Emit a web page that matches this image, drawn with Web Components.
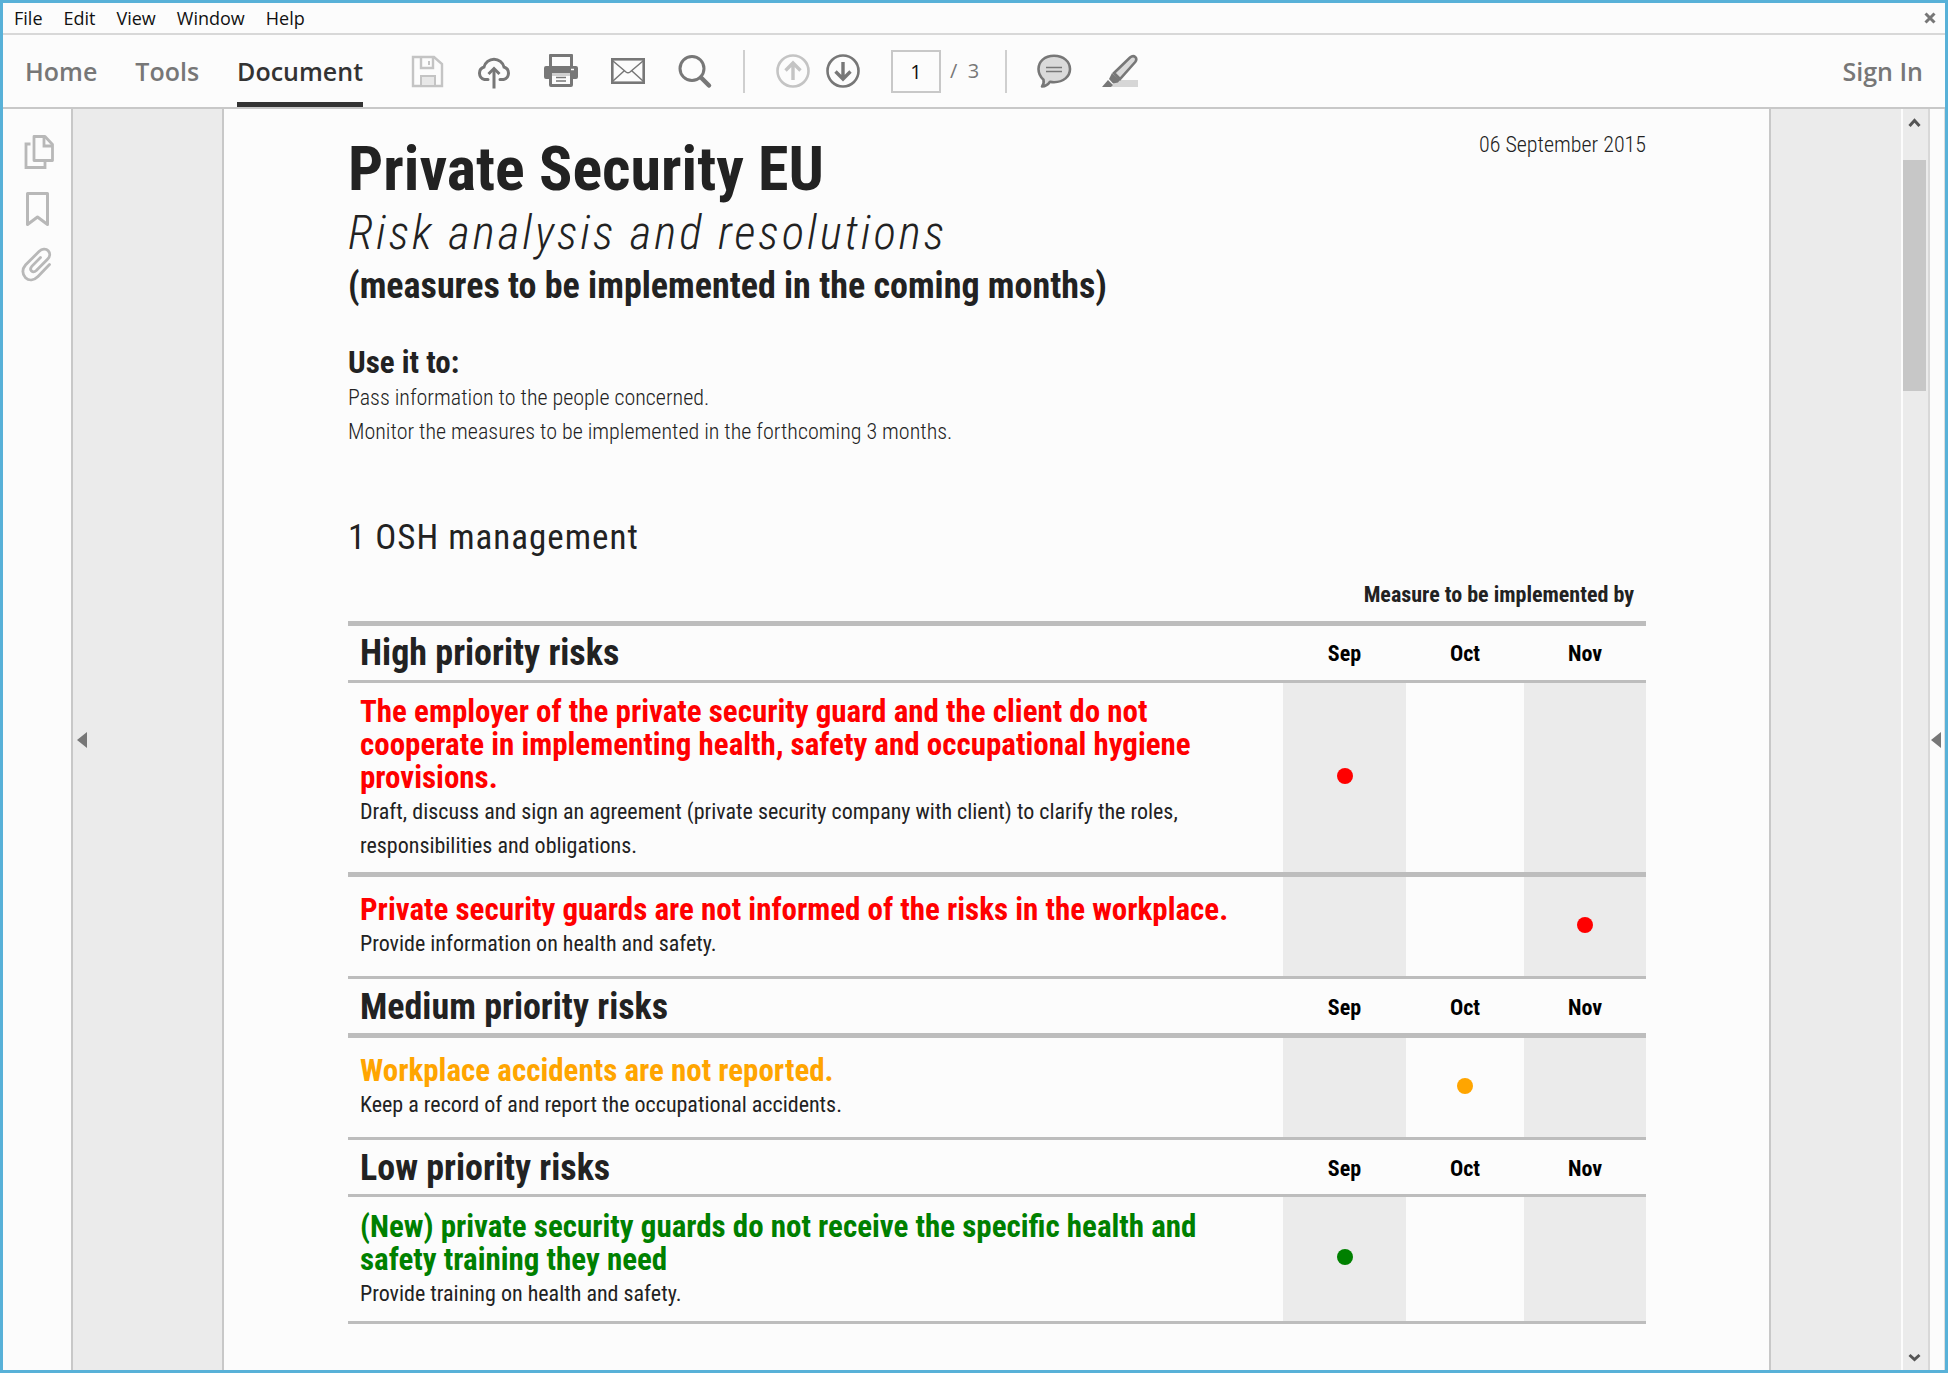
<!DOCTYPE html>
<html lang="en">
<head>
<meta charset="utf-8">
<title>Private Security EU</title>
<style>
  html, body { margin: 0; height: 100%; }
  body { font-family: "Open Sans", "Noto Sans", sans-serif; color: #222; overflow: hidden; }
</style>
</head>
<body>
<app-window>
  <menu-bar slot="menu"></menu-bar>
  <tool-bar slot="tools"></tool-bar>
  <side-rail slot="left"></side-rail>
  <doc-page>
    <risk-table></risk-table>
  </doc-page>
  <scroll-track slot="scroll"></scroll-track>
  <pane-toggle slot="right" label="Open tools pane"></pane-toggle>
</app-window>

<script>
const define = (name, html, setup) => {
  const template = document.createElement('template');
  template.innerHTML = html;
  customElements.define(name, class extends HTMLElement {
    constructor() {
      super();
      this.attachShadow({ mode: 'open' }).append(template.content.cloneNode(true));
    }
    connectedCallback() { if (setup) setup(this, this.shadowRoot); }
  });
};

const icons = {
  save: '<g fill="none" stroke="#c4c4c4" stroke-width="2.4"><path d="M4 4h21l8 7v22H4z"/><path d="M12 4v11h12V4" /><path d="M12 33v-10h14v10z" fill="#e8e8e8" stroke-width="2"/><path d="M20 8v4" stroke-width="2"/></g>',
  cloud: '<g fill="none" stroke="#777" stroke-width="3"><path d="M12 26.500H8.500A6.500 6.500 0 0 1 8 14a10.300 10.300 0 0 1 20 0a6.500 6.500 0 0 1-.5 12.500H24" stroke-linecap="round"/><path d="M18 35.500V17"/><path d="M12.500 21l5.500-5.500 5.500 5.500"/></g>',
  print: '<path fill="#777" d="M7 1h22a1 1 0 0 1 1 1v11h3a2 2 0 0 1 2 2v9a2 2 0 0 1-2 2h-3v6a2 2 0 0 1-2 2H8a2 2 0 0 1-2-2v-6H3a2 2 0 0 1-2-2v-9a2 2 0 0 1 2-2h3V2a1 1 0 0 1 1-1z"/><path fill="#fcfcfc" d="M9 4h18v9H9zM9 20h18v11H9z"/><path d="M9 20h18v3H9z" fill="#d0d0d0"/><path d="M13 24.500h10M13 28h10" stroke="#777" stroke-width="1.600"/><path d="M28 16.500h3" stroke="#fff" stroke-width="1.500"/>',
  mail: '<g fill="none" stroke="#777"><rect x="2.300" y="6.300" width="31.400" height="23.400" stroke-width="2.600"/><path d="M3 8l13 11q2 1.600 4 0L33 8M3 28l11-10M33 28L22 18" stroke-width="1.500"/></g>',
  search: '<g fill="none" stroke="#777"><circle cx="15" cy="15.500" r="12" stroke-width="3"/><path d="M24 24.500l8 8" stroke-width="4.500" stroke-linecap="round"/></g>',
  up: '<g fill="none" stroke="#c4c4c4"><circle cx="18" cy="18" r="15.500" stroke-width="2.600"/><path d="M18 27V11M10.500 17.500L18 10l7.500 7.500" stroke-width="3.400"/></g>',
  down: '<g fill="none" stroke="#777"><circle cx="18" cy="18" r="15.500" stroke-width="2.600"/><path d="M18 9v16M10.500 18.500L18 26l7.500-7.500" stroke-width="3.400"/></g>',
  comment: '<path d="M18 2.800c9.500 0 16 5.800 16 13.200s-6.500 13.200-16 13.200c-1.500 0-2.800-.2-4-.5-2 3-4.500 4.600-8 4.800 1.500-2 2-4.300 1.500-6.800C4.500 24 2.500 20.500 2.500 16 2.500 8.600 8.500 2.800 18 2.800z" fill="#dadada" stroke="#777" stroke-width="2.600" stroke-linejoin="round"/><path d="M10 14.500h16M10 18.500h16" stroke="#777" stroke-width="1.500"/>',
  pen: '<path d="M14 27h22v7H9z" fill="#d6d6d6"/><path d="M12 20L28 4.500q3-2.500 5.200-.5t0 5L18 26z" fill="#dadada" stroke="#777" stroke-width="2.600"/><path d="M10 20l8 7-2 2.500-5 1-4-4.500z" fill="#777"/><path d="M6 27l5 5-2 2H0z" fill="#777"/>',
  pages: '<g fill="none" stroke="#b8b8b8" stroke-width="2.800"><path d="M15 2.500h11l7.500 8v16H15z" stroke-linejoin="round"/><path d="M25 3v9h8"/><path d="M11.500 10H7v23.500h19V28"/></g>',
  bookmark: '<path d="M8.500 3.500h20v31L18.500 27l-10 7.500z" fill="none" stroke="#b8b8b8" stroke-width="3" stroke-linejoin="round"/>',
  clip: '<path d="M30.500 18.500L19 30.500c-4 4-9 4.500-12.500 1.200S3 23 6.500 19L20 5.500c3-3 7-3.200 9.200-.8s2 5.800-.7 8.600L17.300 24.500c-1.600 1.500-3.500 1.700-4.800.4s-1-3.200.5-4.800l8.500-8.600" fill="none" stroke="#b8b8b8" stroke-width="2.800" stroke-linecap="round"/>'
};

define('icon-button', `
<style>
  :host { display: block; flex: none; }
  button { display: block; border: 0; padding: 0; background: none; }
  svg { display: block; width: 36px; height: 36px; }
</style>
<button type="button"><svg viewBox="0 0 36 36" aria-hidden="true"></svg></button>`,
(host, root) => {
  root.querySelector('button').setAttribute('aria-label', host.getAttribute('label'));
  root.querySelector('svg').innerHTML = icons[host.getAttribute('icon')];
});

define('app-window', `
<style>
  :host { display: flex; flex-direction: column; box-sizing: border-box; height: 100vh;
          border: 3px solid #58b1d8; background: #fcfcfc; }
  .work { flex: 1; min-height: 0; display: flex; }
  .canvas { flex: 1; min-width: 0; display: flex; background: #ebebeb; overflow: hidden; }
</style>
<slot name="menu"></slot>
<slot name="tools"></slot>
<div class="work">
  <slot name="left"></slot>
  <div class="canvas">
    <pane-toggle wide label="Close navigation pane"></pane-toggle>
    <slot></slot>
  </div>
  <slot name="scroll"></slot>
  <slot name="right"></slot>
</div>`);

define('menu-bar', `
<style>
  :host { display: flex; align-items: center; height: 30px; padding: 0 8px 0 11px; border-bottom: 2px solid #d8d8d8; }
  nav { flex: 1; display: flex; gap: 21px; }
  button { border: 0; padding: 0; background: none; font: 18px/24px "Open Sans", "Noto Sans", sans-serif; color: #111; }
  svg { display: block; width: 14px; height: 14px; }
</style>
<nav aria-label="Menu">
  <button type="button">File</button><button type="button">Edit</button><button type="button">View</button>
  <button type="button">Window</button><button type="button">Help</button>
</nav>
<button type="button" aria-label="Close document"><svg viewBox="0 0 14 14"><path d="M2.500 2.500l9 9M11.500 2.500l-9 9" stroke="#777" stroke-width="3"/></svg></button>`);

define('tool-bar', `
<style>
  :host { display: flex; align-items: center; height: 72px; padding: 0 22px; border-bottom: 2px solid #c8c8c8; color: #777; }
  a { color: inherit; text-decoration: none; font: 600 25px/33px "Open Sans", "Noto Sans", sans-serif; }
  .tabs { display: flex; gap: 38px; align-self: stretch; }
  .tabs a { display: flex; align-items: center; box-sizing: border-box; border: solid transparent; border-width: 5px 0; }
  .tabs a[aria-current] { color: #333; border-bottom-color: #333; }
  .group { display: flex; align-items: center; }
  .files { gap: 31px; margin-left: 46px; }
  .paging { gap: 14px; margin: 0 26px 0 30px; }
  .notes { gap: 30px; margin-left: 29px; }
  .rule { width: 2px; height: 43px; background: #cfcfcf; }
  .rule.first { margin-left: 30px; }
  input { box-sizing: border-box; width: 50px; height: 43px; margin-left: 16px; border: 2px solid #c8c8c8; background: #fcfcfc;
          text-align: center; padding: 0; color: #111; }
  input, label { font: 20px/28px "Open Sans", "Noto Sans", sans-serif; }
  label { margin-left: -5px; white-space: pre; }
  .sign { margin-left: auto; }
</style>
<nav class="tabs"><a href="#home">Home</a><a href="#tools">Tools</a><a href="#document" aria-current="page">Document</a></nav>
<div class="group files">
  <icon-button icon="save" label="Save"></icon-button>
  <icon-button icon="cloud" label="Upload"></icon-button>
  <icon-button icon="print" label="Print"></icon-button>
  <icon-button icon="mail" label="Send by email"></icon-button>
  <icon-button icon="search" label="Find"></icon-button>
</div>
<div class="rule first"></div>
<div class="group paging">
  <icon-button icon="up" label="Previous page"></icon-button>
  <icon-button icon="down" label="Next page"></icon-button>
  <input id="page" value="1">
  <label for="page">/  3</label>
</div>
<div class="rule"></div>
<div class="group notes">
  <icon-button icon="comment" label="Comment"></icon-button>
  <icon-button icon="pen" label="Highlight"></icon-button>
</div>
<a class="sign" href="#sign-in">Sign In</a>`);

define('side-rail', `
<style>
  :host { display: flex; flex-direction: column; align-items: center; gap: 20px; width: 70px; flex: none;
          padding-top: 25px; box-sizing: border-box; border-right: 2px solid #c8c8c8; }
</style>
<icon-button icon="pages" label="Page thumbnails"></icon-button>
<icon-button icon="bookmark" label="Bookmarks"></icon-button>
<icon-button icon="clip" label="Attachments"></icon-button>`);

define('pane-toggle', `
<style>
  :host { display: flex; align-items: center; flex: none; width: 15px; padding-left: 1px; box-sizing: border-box; border-right: 1px solid #ddd; }
  :host([wide]) { width: 151px; padding-left: 4px; border-right: 2px solid #c8c8c8; }
  button { border: 0; padding: 0; background: none; }
  svg { display: block; width: 10px; height: 16px; }
</style>
<button type="button"><svg viewBox="0 0 10 16"><path d="M10 0v16L0 8z" fill="#777"/></svg></button>`,
(host, root) => root.querySelector('button').setAttribute('aria-label', host.getAttribute('label')));

define('scroll-track', `
<style>
  :host { display: flex; flex-direction: column; align-items: flex-start; flex: none; width: 29px; box-sizing: border-box;
          border-left: 2px solid #fcfcfc; border-right: 2px solid #d8d8d8; background: #ebebeb; }
  button { border: 0; padding: 8px 5px; background: none; }
  button:last-of-type { padding-bottom: 6px; }
  svg { display: block; width: 13px; height: 12px; }
  .track { flex: 1; align-self: stretch; padding: 23px 2px 0 0; }
  .thumb { height: 19.500%; background: #c7c7c7; }
</style>
<button type="button" aria-label="Scroll up"><svg viewBox="0 0 13 12"><path d="M1.500 9l5-5.500 5 5.500" fill="none" stroke="#555" stroke-width="3"/></svg></button>
<div class="track"><div class="thumb"></div></div>
<button type="button" aria-label="Scroll down"><svg viewBox="0 0 13 12"><path d="M1.500 3l5 4.500 5-4.500" fill="none" stroke="#555" stroke-width="3"/></svg></button>`);

define('doc-page', `
<style>
  :host { display: block; flex: 1; min-width: 0; box-sizing: border-box; margin-right: 130px; padding: 19px 123px 0 124px;
          background: #fcfcfc; border-right: 2px solid #c8c8c8;
          font-family: "Roboto Condensed", "Liberation Sans Narrow", "Roboto", sans-serif; }
  header { display: flex; justify-content: space-between; align-items: flex-start; }
  h1, h2, h3, p { margin: 0; }
  h1 { font-size: 62px; line-height: 82px; font-weight: 700; }
  .sub { font-size: 47px; line-height: 46px; font-weight: 300; font-style: italic; letter-spacing: 3px; }
  .scope { font-size: 36px; line-height: 60px; font-weight: 700; }
  h3 { margin-top: 29px; font-size: 31px; line-height: 36px; font-weight: 700; }
  p { font-size: 22px; line-height: 34px; font-weight: 300; }
  .topic { margin-top: 64px; font-size: 35px; line-height: 50px; font-weight: 400; letter-spacing: 1px; }
</style>
<header><h1>Private Security EU</h1><p><time datetime="2015-09-06">06 September 2015</time></p></header>
<h2 class="sub">Risk analysis and resolutions</h2>
<h2 class="scope">(measures to be implemented in the coming months)</h2>
<h3>Use it to:</h3>
<p>Pass information to the people concerned.</p>
<p>Monitor the measures to be implemented in the forthcoming 3 months.</p>
<h2 class="topic">1 OSH management</h2>
<slot></slot>`);

define('risk-table', `
<style>
  :host { display: block; margin-top: 15px; }
  table { width: 100%; table-layout: fixed; border-spacing: 0; color: #222; }
  .m1 { width: 123px; } .m2 { width: 118px; } .m3 { width: 122px; }
  caption { text-align: right; padding: 0 12px 9px 0; font-size: 22px; line-height: 34px; font-weight: 700; }
  th, td { padding: 0; border-bottom: 3px solid #bdbdbd; }
  tbody:first-of-type tr:first-child > * { border-top: 5px solid #bdbdbd; }
  tr.thick > * { border-bottom-width: 5px; }
  th { height: 54px; font-size: 22px; font-weight: 700; color: #000; }
  .medium th, .low th { height: 52px; padding-top: 2px; }
  th:first-child { text-align: left; padding-left: 12px; font-size: 36px; line-height: 40px; color: #222; }
  td { text-align: center; padding-bottom: 6px; }
  td:first-child { padding: 12px 40px 9px 12px; text-align: left; }
  .short td { height: 102px; box-sizing: border-box; }
  .short td:first-child { padding-top: 3px; padding-bottom: 2px; }
  .low td:first-child { padding-top: 13px; padding-bottom: 10px; }
  td:nth-child(even), td:nth-child(4) { background: #ebebeb; }
  strong { display: block; font-size: 31px; line-height: 33px; font-weight: 700; }
  span { display: block; margin-top: 1px; font-size: 22px; line-height: 34px; }
  i { display: inline-block; width: 16px; height: 16px; border-radius: 50%; background: currentColor; vertical-align: middle; }
  .high strong, .high i { color: #f00; }
  .medium strong, .medium i { color: #ffa500; }
  .low strong, .low i { color: #008000; }
</style>
<table>
  <caption>Measure to be implemented by</caption>
  <colgroup><col><col class="m1"><col class="m2"><col class="m3"></colgroup>
  <tbody class="high">
    <tr><th scope="col">High priority risks</th><th scope="col">Sep</th><th scope="col">Oct</th><th scope="col">Nov</th></tr>
    <tr class="thick"><td><strong>The employer of the private security guard and the client do not cooperate in implementing health, safety and occupational hygiene provisions.</strong><span>Draft, discuss and sign an agreement (private security company with client) to clarify the roles, responsibilities and obligations.</span></td><td><i></i></td><td></td><td></td></tr>
    <tr class="short"><td><strong>Private security guards are not informed of the risks in the workplace.</strong><span>Provide information on health and safety.</span></td><td></td><td></td><td><i></i></td></tr>
  </tbody>
  <tbody class="medium">
    <tr class="thick"><th scope="col">Medium priority risks</th><th scope="col">Sep</th><th scope="col">Oct</th><th scope="col">Nov</th></tr>
    <tr class="short"><td><strong>Workplace accidents are not reported.</strong><span>Keep a record of and report the occupational accidents.</span></td><td></td><td><i></i></td><td></td></tr>
  </tbody>
  <tbody class="low">
    <tr><th scope="col">Low priority risks</th><th scope="col">Sep</th><th scope="col">Oct</th><th scope="col">Nov</th></tr>
    <tr><td><strong>(New) private security guards do not receive the specific health and safety training they need</strong><span>Provide training on health and safety.</span></td><td><i></i></td><td></td><td></td></tr>
  </tbody>
</table>`);
</script>
</body>
</html>
